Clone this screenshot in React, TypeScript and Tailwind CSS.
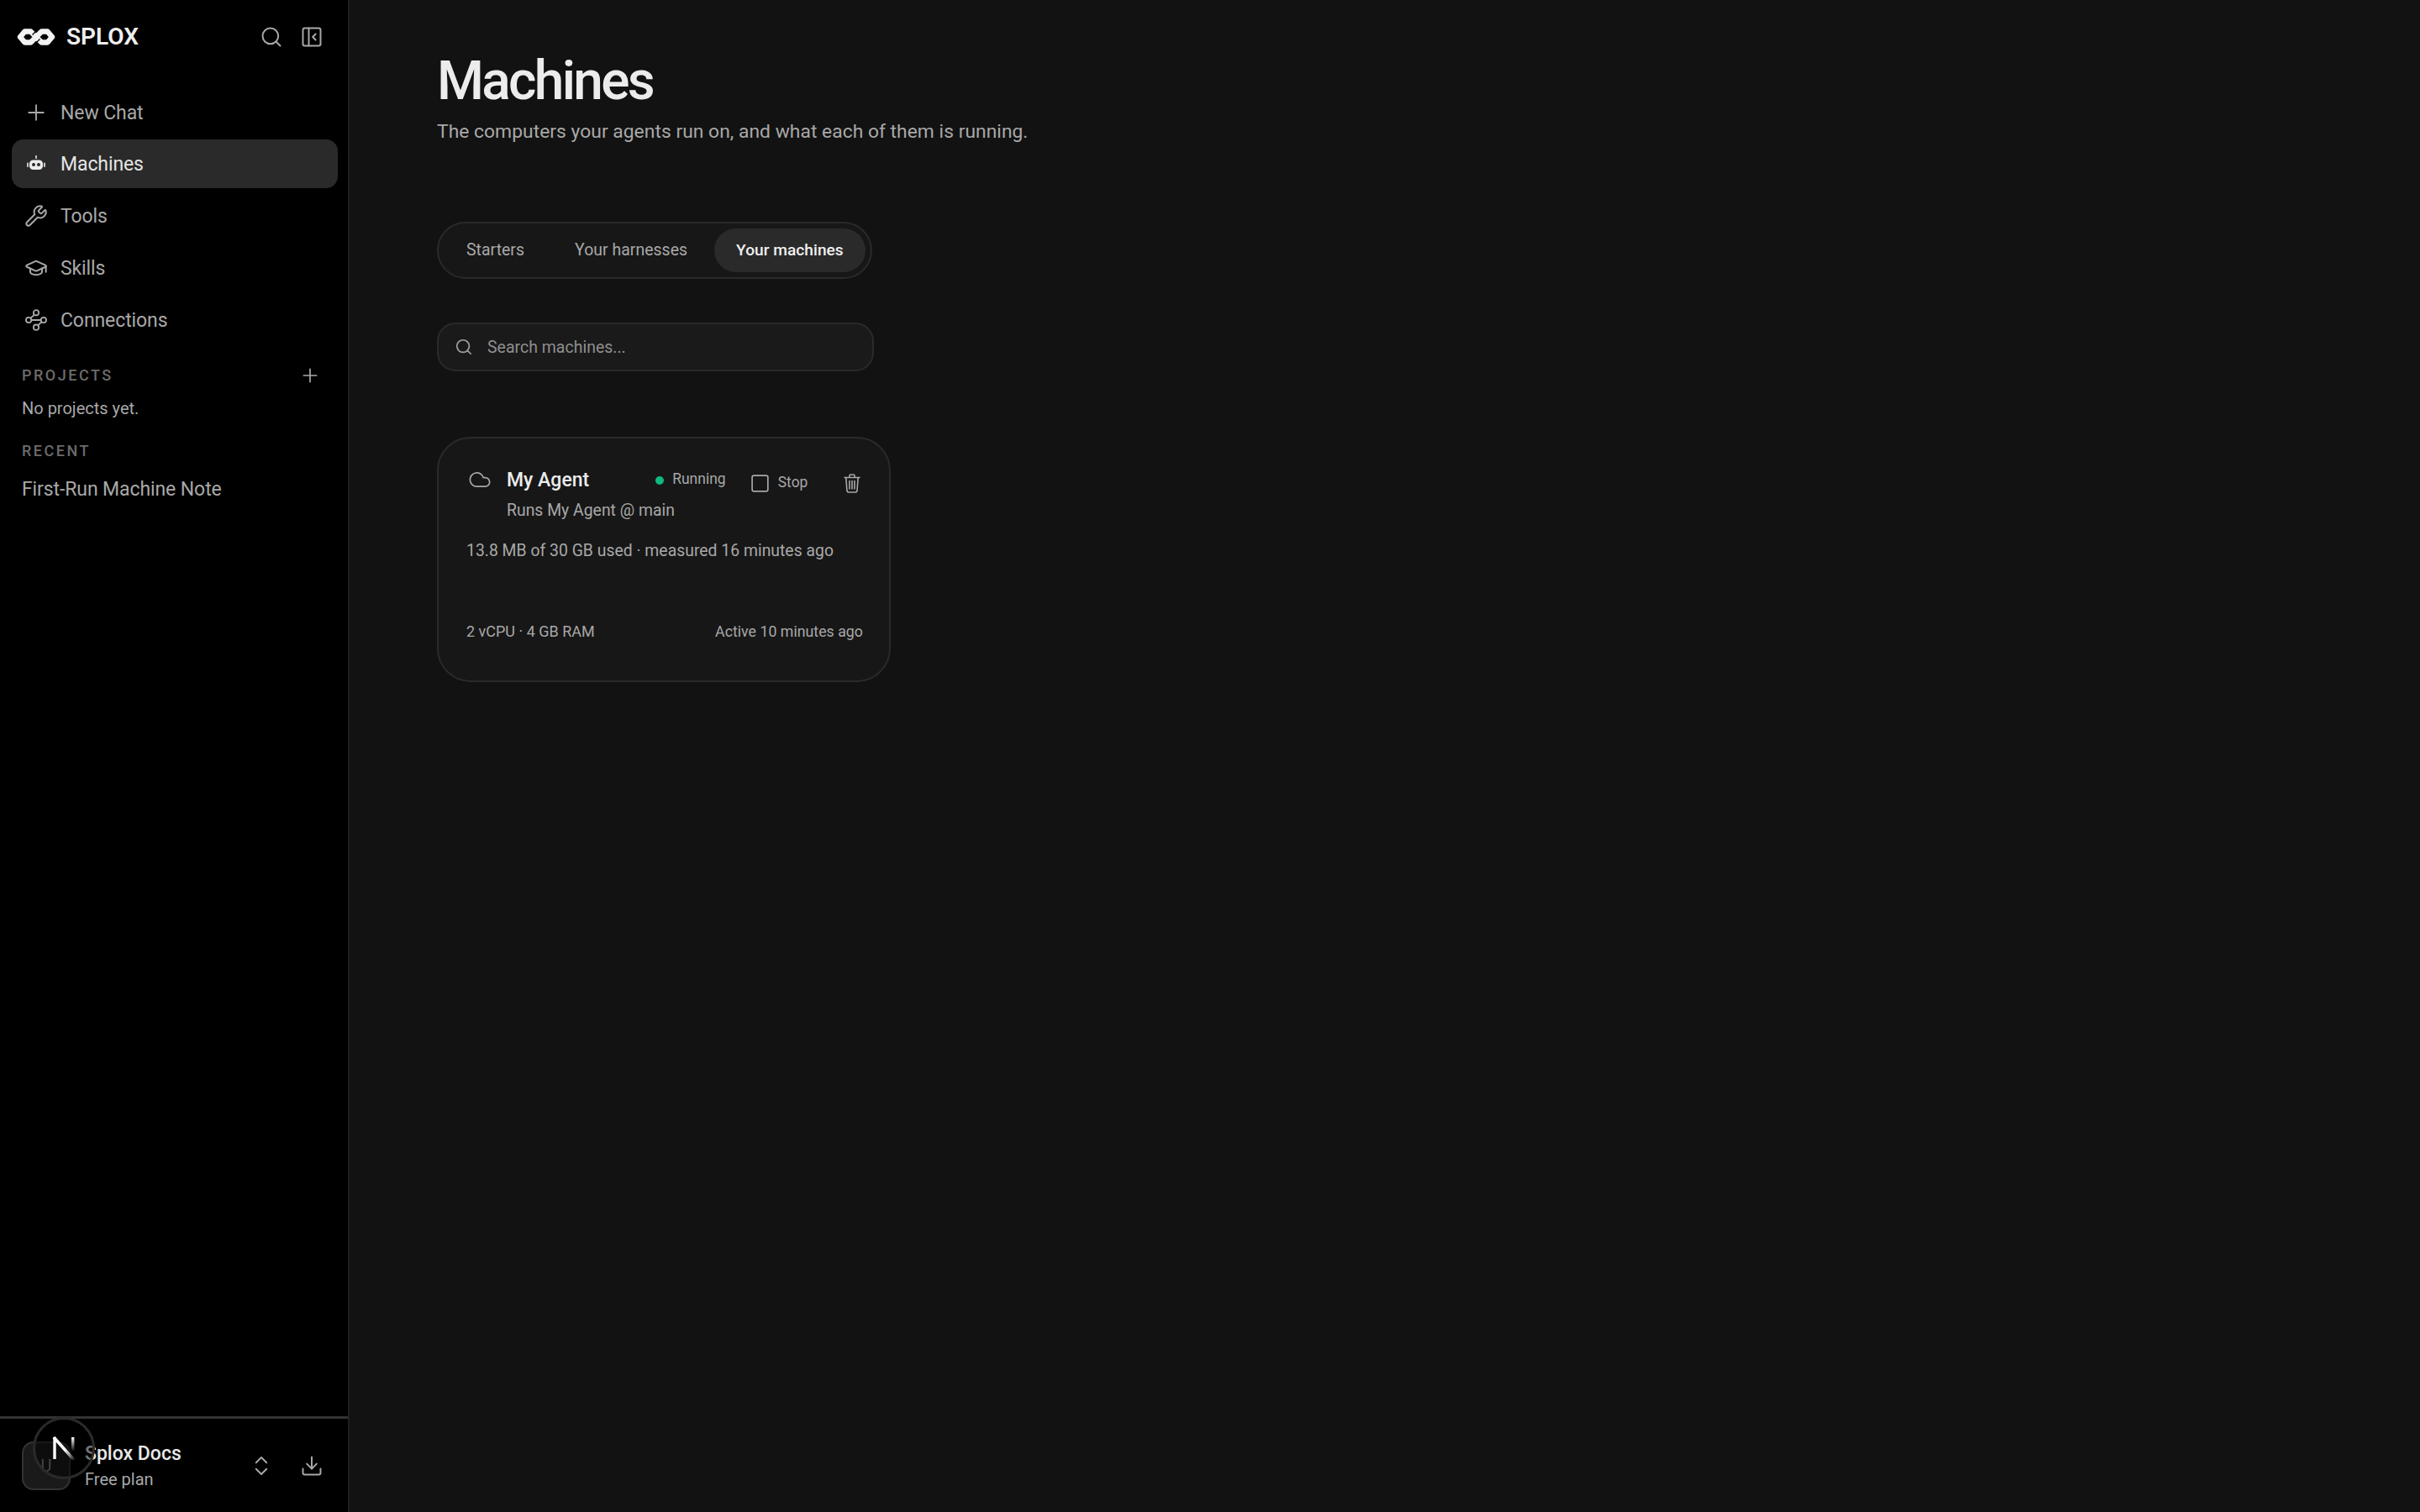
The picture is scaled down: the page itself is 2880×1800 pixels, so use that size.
import React from 'react';
import { ChevronsUpDown, Cloud, Download, GraduationCap, PanelLeftClose, Plus, Search, Square, Wrench } from 'lucide-react';

function SploxLogo() {
  return (
    <svg width="46" height="24" viewBox="0 0 46 24" fill="none" className="shrink-0">
      <path
        d="M23 12 16.5 5.5H9.5L4 12l5.5 6.5h7L23 12l6.5-6.5h7L42 12l-5.5 6.5h-7z"
        stroke="#f2f2f2"
        strokeWidth="6.5"
        strokeLinejoin="round"
      />
      <path d="M18.5 9.5 22 6" stroke="#000" strokeWidth="1.2" />
      <path d="M24 18l3.5-3.5" stroke="#000" strokeWidth="1.2" />
    </svg>
  );
}

function BotIcon() {
  return (
    <svg width="22" height="20" viewBox="0 0 22 20" fill="none">
      <rect x="10" y="0" width="2" height="4" fill="#bdbdbd" />
      <rect x="3" y="5.5" width="16" height="11.5" rx="4.5" fill="#ececec" />
      <rect x="0" y="8.5" width="2" height="5.5" rx="0.8" fill="#c8c8c8" />
      <rect x="20" y="8.5" width="2" height="5.5" rx="0.8" fill="#c8c8c8" />
      <circle cx="8" cy="11" r="2" fill="#2a2a2a" />
      <circle cx="14" cy="11" r="2" fill="#2a2a2a" />
    </svg>
  );
}

function ConnectionsIcon() {
  return (
    <svg width="26" height="26" viewBox="0 0 24 24" fill="none" stroke="#a8a8a8" strokeWidth="1.7">
      <circle cx="12" cy="4" r="2.9" />
      <circle cx="3.8" cy="12" r="2.9" />
      <circle cx="20.2" cy="12" r="2.9" />
      <circle cx="12" cy="20" r="2.9" />
      <path d="M6.7 12h10.6M10 6.2 5.8 10M18.2 14 14 17.8" />
    </svg>
  );
}

function TrashIcon() {
  return (
    <svg width="20" height="23" viewBox="0 0 20 23" fill="none" stroke="#a8a8a8" strokeWidth="1.6" strokeLinecap="round" strokeLinejoin="round">
      <path d="M1 4.5h18M7 4.5V2.2c0-.7.5-1.2 1.2-1.2h3.6c.7 0 1.2.5 1.2 1.2v2.3" />
      <path d="M2.8 4.5 4 20.2c.1 1 .9 1.8 1.9 1.8h8.2c1 0 1.8-.8 1.9-1.8l1.2-15.7" />
      <path d="M7 8.5v9.5M10 8.5v9.5M13 8.5v9.5" />
    </svg>
  );
}

function NavRow({ icon, label, active }: { icon: React.ReactNode; label: string; active?: boolean }) {
  return (
    <div className={`flex h-[58px] items-center rounded-[14px] ${active ? 'bg-[#2a2a2a] text-[#e4e4e4]' : 'text-[#a8a8a8]'}`}>
      <span className="ml-[14px] flex w-[30px] items-center justify-center">{icon}</span>
      <span className="ml-[14px] text-[23px] leading-none tracking-[-0.1px]">{label}</span>
    </div>
  );
}

export default function App() {
  return (
    <div className="flex h-[1800px] w-[2880px] overflow-hidden bg-[#121212] font-['Roboto',sans-serif]">
      {/* Sidebar */}
      <aside className="flex w-[416px] shrink-0 flex-col border-r-[2px] border-[#1f1f1f] bg-black">
        <div className="flex h-[88px] items-center pl-[20px] pr-[29px]">
          <SploxLogo />
          <span className="ml-[13px] text-[28px] font-semibold leading-none text-[#eeeeee]">SPLOX</span>
          <div className="ml-auto flex items-center gap-[20px]">
            <Search size={28} color="#a8a8a8" strokeWidth={1.7} />
            <PanelLeftClose size={28} color="#a8a8a8" strokeWidth={1.7} />
          </div>
        </div>
        <nav className="flex flex-col gap-[4px] pl-[14px] pr-[12px] pt-[17px]">
          <div className="mb-[-1px]">
            <NavRow icon={<Plus size={30} color="#a8a8a8" strokeWidth={1.5} />} label="New Chat" />
          </div>
          <NavRow icon={<BotIcon />} label="Machines" active />
          <NavRow icon={<Wrench size={28} color="#a8a8a8" strokeWidth={1.7} />} label="Tools" />
          <NavRow icon={<GraduationCap size={28} color="#a8a8a8" strokeWidth={1.7} />} label="Skills" />
          <NavRow icon={<ConnectionsIcon />} label="Connections" />
        </nav>
        <div className="mt-[24px] flex items-center justify-between pl-[26px] pr-[32px]">
          <span className="text-[18px] font-medium leading-none tracking-[2.5px] text-[#6b6b6b]">PROJECTS</span>
          <Plus size={26} color="#a8a8a8" strokeWidth={1.6} />
        </div>
        <div className="mt-[16px] pl-[26px] text-[20px] leading-none text-[#a8a8a8]">No projects yet.</div>
        <div className="mt-[32px] pl-[26px] text-[18px] font-medium leading-none tracking-[2.5px] text-[#6b6b6b]">RECENT</div>
        <div className="mt-[25px] pl-[26px] text-[23px] leading-none tracking-[-0.1px] text-[#a8a8a8]">First-Run Machine Note</div>

        <div className="relative mt-auto flex h-[114px] items-center border-t-[3px] border-[#333333] pl-[26px] pr-[29px]">
          <div className="flex h-[58px] w-[58px] shrink-0 items-center justify-center rounded-[14px] border-[2px] border-[#333333] bg-[#1a1a1a] text-[20px] text-[#888888]">
            U
          </div>
          <div className="ml-[17px] flex flex-col gap-[9px]">
            <span className="text-[23px] font-medium leading-none text-[#e8e8e8]">Splox Docs</span>
            <span className="text-[20px] leading-none text-[#a8a8a8]">Free plan</span>
          </div>
          <div className="ml-auto flex items-center gap-[31px]">
            <ChevronsUpDown size={30} color="#a8a8a8" strokeWidth={1.5} />
            <Download size={28} color="#a8a8a8" strokeWidth={1.7} />
          </div>
          {/* dev indicator sits over the account row */}
          <div className="absolute left-[39px] top-[-2px] flex h-[74px] w-[74px] items-center justify-center rounded-full border-[3px] border-[#2a2a2a] bg-black/50">
            <svg width="28" height="28" viewBox="0 0 28 28" fill="none">
              <defs>
                <linearGradient id="n-fade" x1="0" y1="0" x2="1" y2="1">
                  <stop offset="0.55" stopColor="#ffffff" />
                  <stop offset="1" stopColor="#ffffff" stopOpacity="0.1" />
                </linearGradient>
                <linearGradient id="n-stem" x1="0" y1="0" x2="0" y2="1">
                  <stop offset="0" stopColor="#ffffff" />
                  <stop offset="1" stopColor="#ffffff" stopOpacity="0" />
                </linearGradient>
              </defs>
              <path d="M3 1v26" stroke="#ffffff" strokeWidth="3.4" />
              <path d="M2 1 26 28" stroke="url(#n-fade)" strokeWidth="3.6" />
              <rect x="23" y="1" width="3.4" height="17" fill="url(#n-stem)" />
            </svg>
          </div>
        </div>
      </aside>

      {/* Main */}
      <main className="flex-1 pl-[104px] pt-[61px]">
        <h1 className="text-[64px] font-medium leading-[72px] tracking-[-2.7px] text-[#ececec]">Machines</h1>
        <p className="mt-[6px] text-[22.9px] leading-[36px] text-[#a8a8a8]">
          The computers your agents run on, and what each of them is running.
        </p>

        <div className="mt-[89px] inline-flex h-[68px] items-center rounded-full border-[2px] border-[#2a2a2a] bg-[#171717] pl-[6px] pr-[6px]">
          <span className="pl-[27px] pr-[30px] text-[19.5px] text-[#a8a8a8]">Starters</span>
          <span className="pl-[30px] pr-[32px] text-[19.5px] text-[#a8a8a8]">Your harnesses</span>
          <span className="flex h-[52px] items-center rounded-full bg-[#2a2a2a] px-[26px] text-[19.2px] font-medium text-[#f0f0f0]">Your machines</span>
        </div>

        <div className="mt-[52px] flex h-[58px] w-[520px] items-center rounded-[22px] border-[2px] border-[#2a2a2a] bg-[#1a1a1a] pl-[19px]">
          <Search size={22} color="#a0a0a0" strokeWidth={1.9} />
          <span className="ml-[17px] mt-[1px] text-[19.5px] text-[#8f8f8f]">Search machines...</span>
        </div>

        <div className="mt-[78px] flex h-[292px] w-[540px] flex-col rounded-[40px] border-[2px] border-[#2a2a2a] bg-[#171717] pl-[33px] pr-[34px] pt-[34px]">
          <div className="flex items-start">
            <Cloud size={28} color="#a8a8a8" strokeWidth={1.5} className="ml-[2px] mt-[1px]" />
            <div className="ml-[18px] flex flex-1 flex-col">
              <div className="flex items-center">
                <span className="text-[23px] font-medium leading-[32px] text-[#ececec]">My Agent</span>
                <span className="ml-[79px] h-[10px] w-[10px] rounded-full bg-[#10b981]" />
                <span className="ml-[10px] mt-[-2px] text-[17.5px] leading-none text-[#a8a8a8]">Running</span>
                <Square size={25} color="#a8a8a8" strokeWidth={1.6} className="ml-[28px] mt-[6px]" />
                <span className="ml-[9px] mt-[6px] text-[17.5px] leading-none text-[#a8a8a8]">Stop</span>
                <span className="ml-auto mt-[6px]"><TrashIcon /></span>
              </div>
              <span className="mt-[8px] text-[19.4px] leading-[24px] text-[#a8a8a8]">Runs My Agent @ main</span>
            </div>
          </div>
          <div className="mt-[24px] whitespace-nowrap text-[19.4px] leading-[24px] text-[#a8a8a8]">13.8 MB of 30 GB used · measured 16 minutes ago</div>
          <div className="mt-[72px] flex w-[472px] items-center justify-between text-[18px] leading-[24px] text-[#a8a8a8]">
            <span>2 vCPU · 4 GB RAM</span>
            <span className="text-[17.8px]">Active 10 minutes ago</span>
          </div>
        </div>
      </main>
    </div>
  );
}
